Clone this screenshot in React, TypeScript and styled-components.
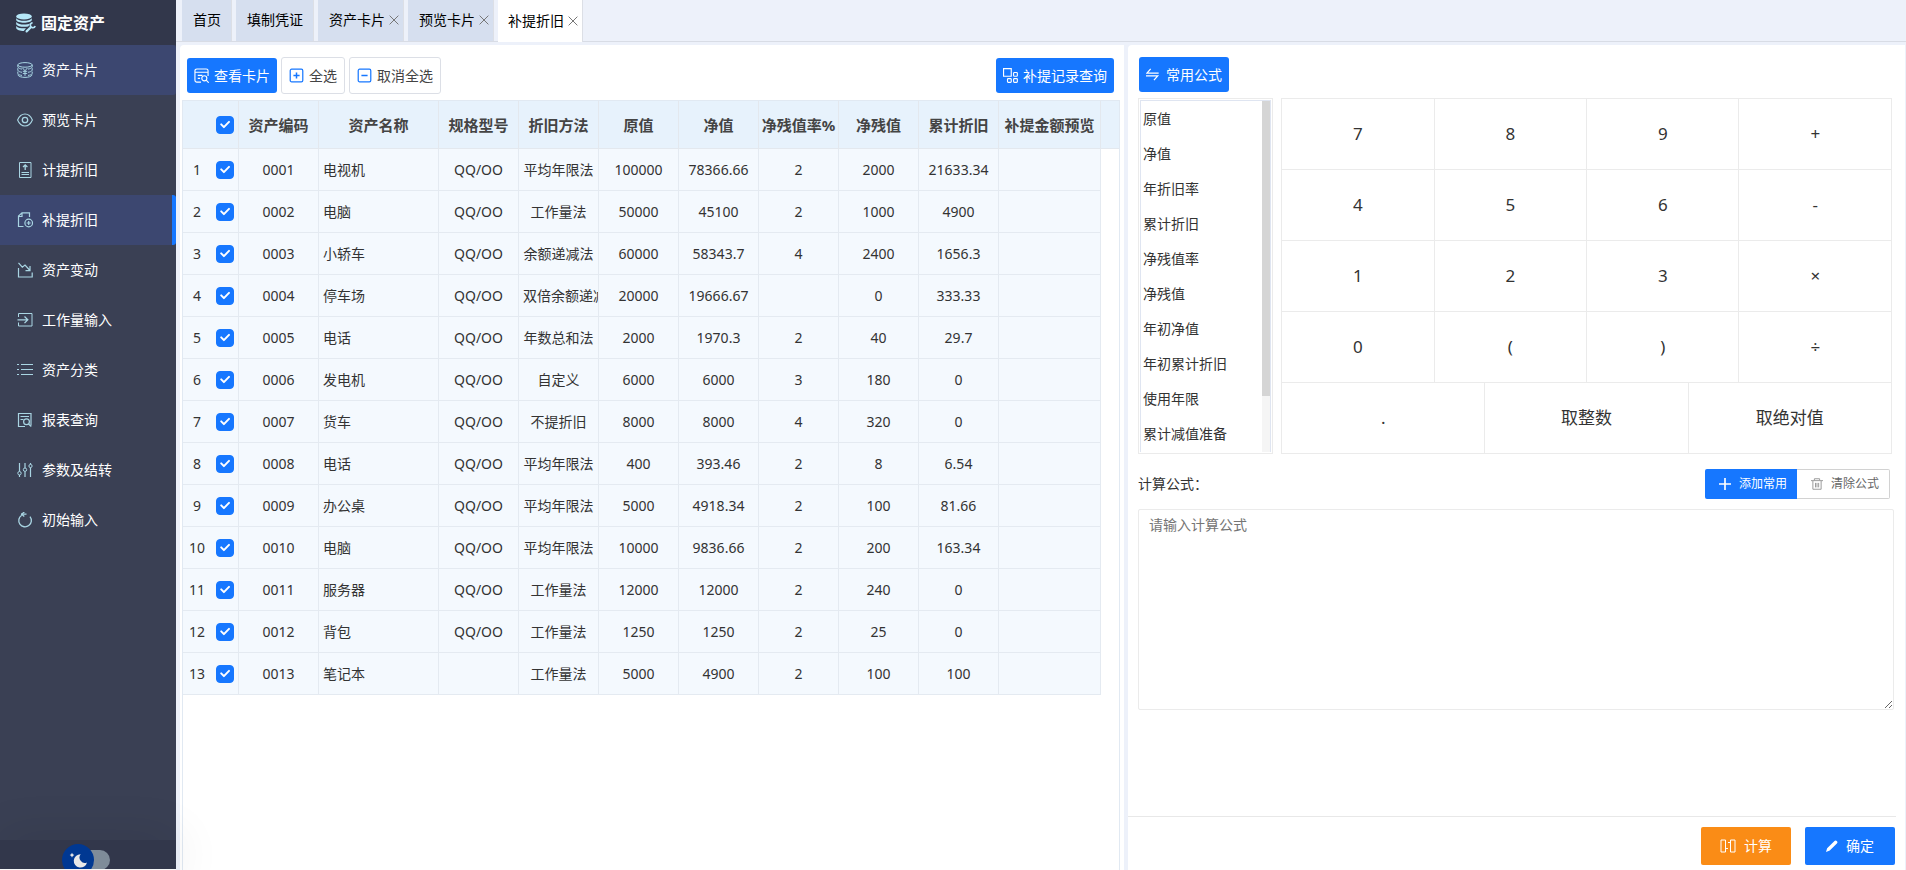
import React from "react";
import styled, { createGlobalStyle, css } from "styled-components";

const GlobalStyle = createGlobalStyle`
  *, *::before, *::after { box-sizing: border-box; }
  body {
    margin: 0;
    background: #fff;
    color: #333;
    font-family: "Noto Sans", "Noto Sans CJK SC", sans-serif;
    font-size: 14px;
    line-height: 20px;
  }
  button, input, textarea { font: inherit; }
  button { cursor: pointer; }
`;

/* ---------- icons ---------- */

const Svg = styled.svg.attrs({ fill: "none", "aria-hidden": true })<{ $size?: number }>`
  width: ${(p) => p.$size ?? 16}px;
  height: ${(p) => p.$size ?? 16}px;
  flex: none;
  stroke: currentColor;
  stroke-width: 1;
`;

const Icon = ({ size, children }: { size?: number; children: React.ReactNode }) => (
  <Svg $size={size} viewBox="0 0 16 16">
    {children}
  </Svg>
);

const LogoIcon = () => (
  <Svg $size={20} viewBox="0 0 20 20">
    <g fill="currentColor" stroke="none">
      <ellipse cx="8" cy="3.4" rx="7.800" ry="3" />
      <path d="M.2 5.200c1.600 2 4.600 2.500 7.800 2.500s6.200-.5 7.800-2.500v1.900c-.6 1.800-4.200 2.700-7.800 2.700S.8 8.900.2 7.100z" />
      <path d="M.2 9c1.600 2 4.600 2.500 7.800 2.500 2.400 0 4.800-.3 6.400-1.300l-2.200 3.200c-4.400.8-11.200.2-12-2.500z" />
      <path d="M.2 12.900c1.600 2 5 2.500 9.800 2.400l-2.200 2.600C4 17.900.6 16.800.2 14.900z" />
    </g>
    <path d="M10.600 18.400l4.200-4.200" strokeWidth="2.200" strokeLinecap="round" />
    <path d="M16.600 9.700a2.500 2.500 0 1 0 2.600 3.300" strokeWidth="1.600" />
  </Svg>
);

const CoinIcon = () => (
  <Icon>
    <ellipse cx="8" cy="2.900" rx="7.200" ry="2.300" />
    <path d="M.8 3v1.900c.4 1.200 2.200 1.900 4.200 2.200M15.200 3v1.900c-.4 1.200-2.200 1.900-4.200 2.200M.8 6.200v2c.4 1.200 2.200 1.800 4.200 2.100M15.200 6.200v2c-.4 1.200-2.200 1.800-4.200 2.100M.8 9.600v1.900c.4 1.200 2.200 1.600 4.200 1.900M15.200 9.600v1.900c-.4 1.200-2.200 1.600-4.200 1.900M.8 12.700c1 3.600 13.400 3.600 14.400 0" />
    <path d="M5.600 6L8 8.800 10.400 6M8 8.800v5M5.800 9.300h4.400M5.800 11.400h4.400" />
  </Icon>
);
const EyeIcon = () => (
  <Icon>
    <path d="M.6 8C2.200 4.200 4.800 2 8 2s5.800 2.200 7.400 6c-1.600 3.800-4.200 6-7.400 6S2.200 11.800.6 8z" strokeWidth="1.100" />
    <circle cx="8" cy="8" r="2.700" strokeWidth="1.300" />
  </Icon>
);
const AccrueIcon = () => (
  <Icon>
    <path d="M2.500.5h11.500v15H2.500z" />
    <path d="M8.200 8V3M6 5l2.200-2 2.200 2" strokeWidth="1.300" />
    <path d="M4.500 10.500h7.500M4.500 12.500h7.500" />
  </Icon>
);
const SupplementIcon = () => (
  <Icon>
    <path d="M6.500 14.500H1.500V4L5 .8h7.500V5M5 1v3.500H1.500" strokeWidth="1.200" />
    <circle cx="11.700" cy="11" r="3.800" strokeWidth="1.200" />
    <path d="M9.700 11h4M11.700 9v4" strokeWidth="1.200" />
  </Icon>
);
const TrendIcon = () => (
  <Icon>
    <path d="M1.500 6v9h13.700v-4.500" strokeWidth="1.200" />
    <path d="M1.500.8l3.800 4.400L8 3l5 5.500M13 4v4.700H8.500" strokeWidth="1.200" />
  </Icon>
);
const InputIcon = () => (
  <Icon>
    <path d="M1.500 5V1.500h13.500v12.500H1.500v-3.500" />
    <path d="M.5 7.800h9.500M7.500 4.500l3.300 3.300-3.300 3.300" strokeWidth="1.300" />
  </Icon>
);
const ListIcon = () => (
  <Icon>
    <path d="M0 2.500h2M4 2.500h12M0 7.500h2M4 7.500h12M0 12.500h2M4 12.500h12" />
  </Icon>
);
const ReportIcon = ({ size }: { size?: number }) => (
  <Icon size={size}>
    <path d="M8 14.500H1.500v-13h12.500v12M3.500 4.500h8.500M3.500 7.500h3" strokeWidth="1.200" />
    <circle cx="9.500" cy="9.800" r="2.900" strokeWidth="1.200" />
    <path d="M11.500 12l2.800 2.500" strokeWidth="1.200" />
  </Icon>
);
const QueryIcon = () => (
  <Icon size={15}>
    <path d="M7.500 15H3a2 2 0 0 1-2-2V3a2 2 0 0 1 2-2h10a2 2 0 0 1 2 2v5.500M1 4.500h14M4 7.800h5M4 11h2.500" strokeWidth="1.200" />
    <circle cx="11" cy="11" r="2.700" strokeWidth="1.200" />
    <path d="M13 13l2.700 2.700" strokeWidth="1.200" />
  </Icon>
);
const SlidersIcon = () => (
  <Icon>
    <path d="M2.500 1v8.500M2.500 13v2M8 1v5M8 9.500V15M13.500 1v1.500M13.500 5.500V15" strokeWidth="1.200" />
    <circle cx="2.500" cy="11.200" r="1.700" />
    <circle cx="8" cy="7.700" r="1.700" />
    <circle cx="13.500" cy="4" r="1.600" />
  </Icon>
);
const ResetIcon = () => (
  <Icon>
    <path d="M4.700 3.200A6.300 6.300 0 1 0 13 4.600M4 2.200h5.500" strokeWidth="1.300" />
    <path d="M7.300 0L4.700 2.200l2.600 2.300" strokeWidth="1.300" />
  </Icon>
);
const BoxIcon = ({ plus }: { plus?: boolean }) => (
  <Icon size={15}>
    <rect x="1.300" y="1.300" width="13.400" height="13.400" rx="1.500" strokeWidth="1.300" />
    <path d={plus ? "M4.700 8h6.600M8 4.700v6.600" : "M4.700 8h6.600"} strokeWidth="1.600" />
  </Icon>
);
const BlocksIcon = () => (
  <Icon size={15}>
    <path d="M.6.6h8.200v8.200H.6z" strokeWidth="1.200" />
    <rect x="11.300" y="4.800" width="4" height="4" rx=".8" strokeWidth="1.200" />
    <rect x="4.800" y="11.300" width="4" height="4" rx=".8" strokeWidth="1.200" />
    <rect x="11.300" y="11.300" width="4" height="4" rx=".8" strokeWidth="1.200" />
  </Icon>
);
const SwapIcon = () => (
  <Icon size={15}>
    <path d="M5 2L1 6.500h12.500M0 9.500h12.500L8.500 14" strokeWidth="1.300" />
  </Icon>
);
const PlusIcon = () => (
  <Icon size={12}>
    <path d="M0 8h16M8 0v16" strokeWidth="2.200" />
  </Icon>
);
const TrashIcon = () => (
  <Icon size={12}>
    <path d="M0 3.500h16M4.500 3V1h7v2M2.500 4v11h11V4M6 6.500v6M8 6.500v6M10.200 6.500v6" strokeWidth="1.300" />
  </Icon>
);
const CalcIcon = () => (
  <Icon>
    <path d="M1 2h4.500v12H1zM10.500 2H15v12h-4.500zM5.500 10.500H8M8 4.500h2.500" />
  </Icon>
);
const PencilIcon = () => (
  <Icon size={12}>
    <path d="M0 16l1.500-5L11 1.500a2 2 0 0 1 3.500 3.300L5 14z" fill="currentColor" stroke="none" />
  </Icon>
);
const CloseIcon = () => (
  <Icon size={10}>
    <path d="M1 1l14 14M15 1L1 15" strokeWidth="1.600" />
  </Icon>
);

/* ---------- sidebar ---------- */

const Shell = styled.div`
  display: flex;
  height: 100vh;
  min-height: 720px;
`;

const Sidebar = styled.aside`
  display: flex;
  flex-direction: column;
  flex: none;
  width: 176px;
  margin-bottom: 1px;
  background: #3a4054;
  color: #fff;
  z-index: 1;
`;

const Brand = styled.h1`
  display: flex;
  align-items: center;
  gap: 5px;
  height: 45px;
  margin: 0;
  padding: 0 16px;
  background: #32374b;
  font-size: 16px;
  font-weight: 700;
  svg { color: #b5e6f7; }
`;

const Nav = styled.nav`
  display: flex;
  flex-direction: column;
  flex: 1;
`;

const NavLink = styled.a<{ $lit?: boolean; $current?: boolean }>`
  display: flex;
  align-items: center;
  gap: 9px;
  height: 50px;
  padding: 0 17px;
  border-right: 4px solid ${(p) => (p.$current ? "#1677ff" : "transparent")};
  border-radius: 0 3px 3px 0;
  background: ${(p) => (p.$lit ? "#3c4770 border-box" : "none")};
  color: #fff;
  text-decoration: none;
  svg { color: #a9d5e3; }
`;

const SidebarFoot = styled.div`
  height: 29px;
  background: #32374b;
  box-shadow: 0 0 50px rgba(0, 0, 0, 0.12);
`;

const SwitchClip = styled.div`
  height: 29px;
  padding: 4px 0 0 62px;
  overflow: hidden;
`;

const ThemeSwitch = styled.button`
  display: flex;
  align-items: center;
  width: 48px;
  height: 32px;
  padding: 0;
  border: 0;
  background: none;
  svg { width: 48px; height: 32px; }
`;

/* ---------- tabs ---------- */

const Main = styled.main`
  display: flex;
  flex-direction: column;
  flex: 1;
  min-width: 0;
  background: #edf1fa;
`;

const TabBar = styled.div`
  display: flex;
  gap: 4px;
  height: 42px;
  padding-left: 6px;
  border-bottom: 1px solid #d8dce5;
`;

const Tab = styled.div<{ $active?: boolean; $closable?: boolean }>`
  display: flex;
  align-items: center;
  gap: 4px;
  height: ${(p) => (p.$active ? 42 : 41)}px;
  padding: 0 ${(p) => (p.$closable ? 4 : 10)}px 1px ${(p) => (p.$active ? 10 : 11)}px;
  border-right: 1px solid #dcdfe6;
  background: ${(p) => (p.$active ? "#fff" : "#d6dfef")};
  color: #000;
  a { color: inherit; text-decoration: none; }
`;

const TabClose = styled.button`
  display: flex;
  padding: 0;
  border: 0;
  background: none;
  color: #777;
`;

const Panes = styled.div`
  display: grid;
  grid-template-columns: minmax(0, 944fr) minmax(0, 777fr);
  gap: 4px;
  flex: 1;
  min-height: 0;
  margin: 3px 1px 0 4px;
`;

/* ---------- buttons ---------- */

const Button = styled.button<{ $kind?: "primary" | "warning" | "plain"; $size?: "wide" | "small" }>`
  display: inline-flex;
  align-items: center;
  justify-content: center;
  gap: 5px;
  height: 35px;
  padding: 0 7px;
  border: 0;
  border-radius: 3px;
  white-space: nowrap;
  color: #fff;
  background: ${(p) => (p.$kind === "warning" ? "#fa8c16" : "#1677ff")};
  ${(p) =>
    p.$kind === "plain" &&
    css`
      height: 37px;
      border: 1px solid #dcdfe6;
      background: #fff;
      color: #444;
      svg { color: #1677ff; }
    `}
  ${(p) =>
    p.$size === "wide" &&
    css`
      width: 90px;
      height: 38px;
      gap: 8px;
      border-radius: 2px;
    `}
  ${(p) =>
    p.$size === "small" &&
    css`
      height: 30px;
      gap: 8px;
      padding: 0 10px 0 14px;
      border-radius: 2px;
      font-size: 12px;
    `}
`;

/* ---------- asset table pane ---------- */

const AssetPane = styled.section`
  display: flex;
  flex-direction: column;
  min-width: 0;
  background: #fff;
  border-top-left-radius: 4px;
`;

const Toolbar = styled.div`
  display: flex;
  align-items: center;
  gap: 4px;
  height: 55px;
  padding: 6px 10px 0 7px;
  > :last-child { margin-left: auto; }
`;

const TableFrame = styled.div`
  flex: 1;
  margin: 0 4px 0 2px;
  border: 1px solid #e1e9f2;
  border-bottom: 0;
  overflow: hidden;
`;

const Table = styled.table`
  width: 100%;
  table-layout: fixed;
  border-collapse: separate;
  border-spacing: 0;
`;

const HeadCell = styled.th<{ $open?: boolean }>`
  height: 48px;
  padding: 0;
  border: solid #e3e8ee;
  border-width: 0 ${(p) => (p.$open ? 0 : 1)}px 1px 0;
  background: #e7f2fc;
  color: #444;
  font-size: 15px;
  font-weight: 700;
  white-space: nowrap;
`;

const Cell = styled.td<{ $open?: boolean; $left?: boolean }>`
  height: 42px;
  padding: 0 ${(p) => (p.$open ? 0 : 4)}px;
  border: solid #e4eaf1;
  border-width: 0 ${(p) => (p.$open ? 0 : 1)}px 1px 0;
  background: #f4f9fe;
  text-align: ${(p) => (p.$left ? "left" : "center")};
  white-space: nowrap;
  overflow: hidden;
`;

const CheckCell = styled(Cell)`
  padding: 0;
`;

const CheckLabel = styled.label`
  display: grid;
  width: 18px;
  height: 18px;
  margin: 0 auto;
  > * { grid-area: 1 / 1; }
  svg { width: 18px; height: 18px; pointer-events: none; }
`;

const CheckInput = styled.input`
  appearance: none;
  width: 18px;
  height: 18px;
  margin: 0;
  border: 1px solid #c8ced8;
  border-radius: 4px;
  background: #fff;
  &:checked { border-color: #1677ff; background: #1677ff; }
`;

const Check = ({ name }: { name: string }) => (
  <CheckLabel>
    <CheckInput type="checkbox" defaultChecked aria-label={name} />
    <svg viewBox="0 0 18 18" fill="none" stroke="#fff" strokeWidth="2" strokeLinecap="round" strokeLinejoin="round" aria-hidden>
      <path d="M5.200 8.400l2.700 2.700L13 5.900" />
    </svg>
  </CheckLabel>
);

/* ---------- formula pane ---------- */

const FormulaPane = styled.section`
  display: flex;
  flex-direction: column;
  align-items: stretch;
  min-width: 0;
  background: #fff;
  border-top-left-radius: 4px;
`;

const FormulaBody = styled.div`
  flex: 1;
  padding: 12px 11px 0 10px;
`;

const FormulaTop = styled.div`
  display: flex;
  height: 41px;
  align-items: flex-start;
  padding-left: 1px;
`;

const Builder = styled.div`
  display: flex;
  gap: 8px;
  margin-right: 2px;
`;

const FieldBox = styled.div`
  display: flex;
  flex: none;
  width: 135px;
  height: 356px;
  padding: 1px;
  border: 1px solid #ebebeb;
`;

const FieldFrame = styled.div`
  display: flex;
  flex: 1;
  border: solid #dfe5f1;
  border-width: 1px 1px 0 1px;
`;

const FieldList = styled.ul`
  flex: 1;
  margin: 0;
  padding: 0 0 0 2px;
  list-style: none;
  line-height: 35px;
`;

const ScrollTrack = styled.div`
  width: 8px;
  background: #f5f5f5;
  &::before {
    content: "";
    display: block;
    height: 84%;
    background: #d5d5d5;
  }
`;

const Keypad = styled.div`
  display: grid;
  grid-template-columns: repeat(12, minmax(0, 1fr));
  flex: 1;
  height: 356px;
  border: solid #ebebeb;
  border-width: 1px 0 0 1px;
`;

const Key = styled.button<{ $span: number }>`
  grid-column: span ${(p) => p.$span};
  padding: 0;
  border: solid #ebebeb;
  border-width: 0 1px 1px 0;
  background: #fff;
  color: #333;
  font-size: 17px;
`;

const FormulaHead = styled.div`
  display: flex;
  align-items: center;
  justify-content: space-between;
  height: 55px;
  padding: 5px 4px 0 0;
`;

const ButtonGroup = styled.div`
  display: flex;
  ${Button}:first-child { border-radius: 2px 0 0 2px; }
  ${Button}:last-child {
    border: 1px solid #d2d2d2;
    border-left: 0;
    border-radius: 0 2px 2px 0;
    background: #fff;
    color: #666;
    svg { color: #999; }
  }
`;

const FormulaInput = styled.textarea`
  display: block;
  width: 100%;
  height: 201px;
  padding: 5px 10px;
  border: 1px solid #ebebeb;
  border-radius: 2px;
  outline: 0;
  color: #333;
  &::placeholder { color: #757575; }
`;

const PaneFoot = styled.footer`
  display: flex;
  justify-content: flex-end;
  gap: 14px;
  height: 54px;
  margin-right: 9px;
  padding: 10px 1px 0 0;
  border-top: 1px solid #e8e8e8;
`;

/* ---------- data ---------- */

const navItems = [
  { text: "资产卡片", icon: <CoinIcon />, lit: true },
  { text: "预览卡片", icon: <EyeIcon /> },
  { text: "计提折旧", icon: <AccrueIcon /> },
  { text: "补提折旧", icon: <SupplementIcon />, lit: true, current: true },
  { text: "资产变动", icon: <TrendIcon /> },
  { text: "工作量输入", icon: <InputIcon /> },
  { text: "资产分类", icon: <ListIcon /> },
  { text: "报表查询", icon: <ReportIcon /> },
  { text: "参数及结转", icon: <SlidersIcon /> },
  { text: "初始输入", icon: <ResetIcon /> },
];

const tabs = [
  { text: "首页" },
  { text: "填制凭证" },
  { text: "资产卡片", closable: true },
  { text: "预览卡片", closable: true },
  { text: "补提折旧", closable: true, active: true },
];

const columns = ["资产编码", "资产名称", "规格型号", "折旧方法", "原值", "净值", "净残值率%", "净残值", "累计折旧", "补提金额预览"];
const widths = [28, 28, 80, 120, 80, 80, 80, 80, 80, 80, 80, 102];

const rows = [
  ["0001", "电视机", "QQ/OO", "平均年限法", "100000", "78366.66", "2", "2000", "21633.34", ""],
  ["0002", "电脑", "QQ/OO", "工作量法", "50000", "45100", "2", "1000", "4900", ""],
  ["0003", "小轿车", "QQ/OO", "余额递减法", "60000", "58343.7", "4", "2400", "1656.3", ""],
  ["0004", "停车场", "QQ/OO", "双倍余额递减法", "20000", "19666.67", "", "0", "333.33", ""],
  ["0005", "电话", "QQ/OO", "年数总和法", "2000", "1970.3", "2", "40", "29.7", ""],
  ["0006", "发电机", "QQ/OO", "自定义", "6000", "6000", "3", "180", "0", ""],
  ["0007", "货车", "QQ/OO", "不提折旧", "8000", "8000", "4", "320", "0", ""],
  ["0008", "电话", "QQ/OO", "平均年限法", "400", "393.46", "2", "8", "6.54", ""],
  ["0009", "办公桌", "QQ/OO", "平均年限法", "5000", "4918.34", "2", "100", "81.66", ""],
  ["0010", "电脑", "QQ/OO", "平均年限法", "10000", "9836.66", "2", "200", "163.34", ""],
  ["0011", "服务器", "QQ/OO", "工作量法", "12000", "12000", "2", "240", "0", ""],
  ["0012", "背包", "QQ/OO", "工作量法", "1250", "1250", "2", "25", "0", ""],
  ["0013", "笔记本", "", "工作量法", "5000", "4900", "2", "100", "100", ""],
];

const fields = ["原值", "净值", "年折旧率", "累计折旧", "净残值率", "净残值", "年初净值", "年初累计折旧", "使用年限", "累计减值准备"];
const keys = ["7", "8", "9", "+", "4", "5", "6", "-", "1", "2", "3", "×", "0", "(", ")", "÷"];
const wideKeys = [".", "取整数", "取绝对值"];

export default function App() {
  return (
    <>
      <GlobalStyle />
      <Shell>
        <Sidebar>
          <Brand>
            <LogoIcon />
            固定资产
          </Brand>
          <Nav>
            {navItems.map((item) => (
              <NavLink key={item.text} href="#" $lit={item.lit} $current={item.current}>
                {item.icon}
                {item.text}
              </NavLink>
            ))}
          </Nav>
          <SidebarFoot>
            <SwitchClip>
              <ThemeSwitch type="button" role="switch" aria-checked="false" aria-label="深色模式">
                <svg viewBox="0 0 48 32" aria-hidden>
                  <rect x="8" y="6" width="40" height="20" rx="10" fill="#7f8c99" />
                  <circle cx="16" cy="16" r="16" fill="#003892" />
                  <path d="M18.600 10.200a6.700 6.700 0 1 0 6.400 8.200 5.400 5.400 0 0 1-6.400-8.200z" fill="#e8e8e8" />
                  <path d="M10 8.800l.8 1.500 1.500.8-1.500.8-.8 1.500-.8-1.500-1.500-.8 1.500-.8z" fill="#e8e8e8" />
                </svg>
              </ThemeSwitch>
            </SwitchClip>
          </SidebarFoot>
        </Sidebar>

        <Main>
          <TabBar>
            {tabs.map((tab) => (
              <Tab key={tab.text} $active={tab.active} $closable={tab.closable}>
                <a href="#">{tab.text}</a>
                {tab.closable && (
                  <TabClose type="button" aria-label={`关闭${tab.text}`}>
                    <CloseIcon />
                  </TabClose>
                )}
              </Tab>
            ))}
          </TabBar>

          <Panes>
            <AssetPane>
              <Toolbar>
                <Button type="button">
                  <QueryIcon />
                  查看卡片
                </Button>
                <Button type="button" $kind="plain">
                  <BoxIcon plus />
                  全选
                </Button>
                <Button type="button" $kind="plain">
                  <BoxIcon />
                  取消全选
                </Button>
                <Button type="button">
                  <BlocksIcon />
                  补提记录查询
                </Button>
              </Toolbar>
              <TableFrame>
                <Table>
                  <colgroup>
                    {widths.map((w, i) => (
                      <col key={i} width={w} />
                    ))}
                    <col />
                  </colgroup>
                  <thead>
                    <tr>
                      <HeadCell $open />
                      <HeadCell>
                        <Check name="全选" />
                      </HeadCell>
                      {columns.map((c) => (
                        <HeadCell key={c}>{c}</HeadCell>
                      ))}
                      <HeadCell $open />
                    </tr>
                  </thead>
                  <tbody>
                    {rows.map((row, i) => (
                      <tr key={row[0]}>
                        <Cell $open>{i + 1}</Cell>
                        <CheckCell>
                          <Check name={row[1]} />
                        </CheckCell>
                        {row.map((value, j) => (
                          <Cell key={j} $left={j === 1}>
                            {value}
                          </Cell>
                        ))}
                      </tr>
                    ))}
                  </tbody>
                </Table>
              </TableFrame>
            </AssetPane>

            <FormulaPane>
              <FormulaBody>
                <FormulaTop>
                  <Button type="button">
                    <SwapIcon />
                    常用公式
                  </Button>
                </FormulaTop>
                <Builder>
                  <FieldBox>
                    <FieldFrame>
                      <FieldList>
                        {fields.map((f) => (
                          <li key={f}>{f}</li>
                        ))}
                      </FieldList>
                      <ScrollTrack />
                    </FieldFrame>
                  </FieldBox>
                  <Keypad>
                    {keys.map((k) => (
                      <Key key={k} type="button" $span={3}>
                        {k}
                      </Key>
                    ))}
                    {wideKeys.map((k) => (
                      <Key key={k} type="button" $span={4}>
                        {k}
                      </Key>
                    ))}
                  </Keypad>
                </Builder>
                <FormulaHead>
                  <label htmlFor="formula">计算公式：</label>
                  <ButtonGroup>
                    <Button type="button" $size="small">
                      <PlusIcon />
                      添加常用
                    </Button>
                    <Button type="button" $size="small">
                      <TrashIcon />
                      清除公式
                    </Button>
                  </ButtonGroup>
                </FormulaHead>
                <FormulaInput id="formula" placeholder="请输入计算公式" />
              </FormulaBody>
              <PaneFoot>
                <Button type="button" $kind="warning" $size="wide">
                  <CalcIcon />
                  计算
                </Button>
                <Button type="button" $size="wide">
                  <PencilIcon />
                  确定
                </Button>
              </PaneFoot>
            </FormulaPane>
          </Panes>
        </Main>
      </Shell>
    </>
  );
}
